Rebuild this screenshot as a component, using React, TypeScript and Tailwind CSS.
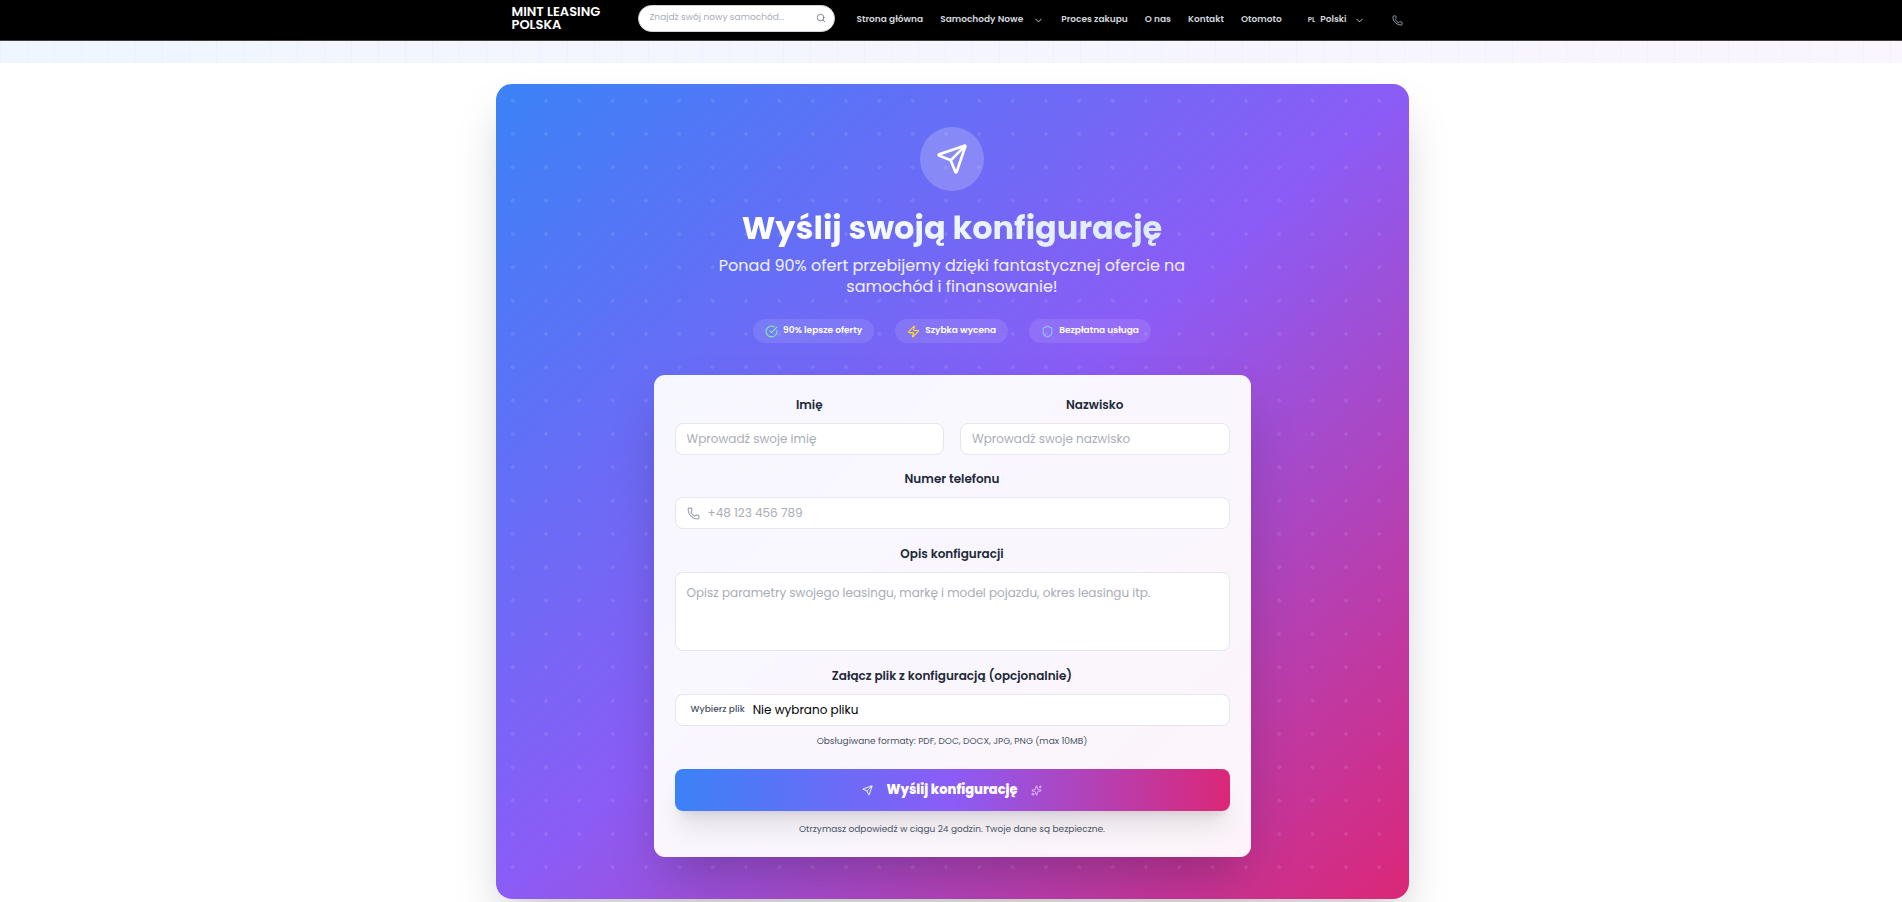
import React from "react";
import {
  ChevronDown,
  CircleCheckBig,
  Phone,
  Search,
  Send,
  Shield,
  Sparkles,
  Zap,
} from "lucide-react";

const navLinks = [
  { label: "Strona główna" },
  { label: "Samochody Nowe", dropdown: true },
  { label: "Proces zakupu" },
  { label: "O nas" },
  { label: "Kontakt" },
  { label: "Otomoto" },
];

const badges = [
  { label: "90% lepsze oferty", icon: CircleCheckBig, color: "text-green-300" },
  { label: "Szybka wycena", icon: Zap, color: "text-yellow-300" },
  { label: "Bezpłatna usługa", icon: Shield, color: "text-blue-300" },
];

const inputClass =
  "h-8 w-full rounded-lg border border-gray-200 bg-white px-[11px] text-[12px] text-gray-900 placeholder:text-[#a9adb6]";

export default function App() {
  return (
    <div className="min-h-screen overflow-hidden bg-white font-[Poppins,Inter,sans-serif] antialiased">
      <Header />
      <div className="h-[22px] bg-linear-to-r from-blue-50 to-purple-50">
        <div className="h-full bg-[linear-gradient(to_right,rgba(99,102,241,0.03)_1px,transparent_1px)] bg-size-[27px_27px]" />
      </div>
      <main className="mt-[21px] pl-0.5">
        <ConfigurationSection />
      </main>
    </div>
  );
}

const Header = () => {
  return (
    <header className="border-b border-neutral-700 bg-black pl-0.5 text-[9px] font-semibold text-gray-300">
      <div className="mx-auto flex h-10 max-w-[913px] items-center pr-1.5 pl-4">
        <a
          href="#"
          className="mb-1 w-[126px] shrink-0 text-[13px] leading-[13px] whitespace-nowrap text-white"
        >
          <span className="block">MINT LEASING</span>
          <span className="block">POLSKA</span>
        </a>
        <form className="mb-1 flex h-[27px] w-[197px] shrink-0 items-center rounded-full border border-gray-300 bg-white pr-2 pl-[11px]">
          <input
            type="search"
            aria-label="Szukaj samochodu"
            placeholder="Znajdź swój nowy samochód..."
            className="min-w-0 flex-1 text-[9px] font-normal text-gray-900 outline-none placeholder:text-[#a9adb6]"
          />
          <Search className="size-[10px] text-gray-500" />
        </form>
        <nav className="ml-[22px] flex items-center gap-[17px] whitespace-nowrap">
          {navLinks.map((link) => (
            <a key={link.label} href="#" className="flex items-center">
              {link.label}
              {link.dropdown && <ChevronDown className="ml-2.5 size-[11px]" />}
            </a>
          ))}
        </nav>
        <button className="ml-[26px] flex items-center gap-[5px]">
          <span className="text-[7px]">PL</span>
          Polski
          <ChevronDown className="ml-0.5 size-[11px]" />
        </button>
        <a href="#" aria-label="Zadzwoń" className="ml-auto text-gray-400">
          <Phone className="size-[11px]" />
        </a>
      </div>
    </header>
  );
};

const ConfigurationSection = () => {
  return (
    <section className="mx-auto max-w-[913px] rounded-2xl bg-[radial-gradient(circle_at_50%_50%,rgba(255,255,255,0.1)_2px,transparent_2px),linear-gradient(to_bottom_right,#3b82f6,#8b5cf6,#db2777)] bg-size-[33.33px_33.33px,100%_100%] px-4 pt-[43px] pb-[42px] text-center shadow-2xl">
      <div className="mx-auto flex size-16 items-center justify-center rounded-full bg-white/20">
        <Send className="size-8 text-white" />
      </div>
      <h1 className="mx-auto mt-4 w-fit bg-linear-to-r from-white to-blue-100 bg-clip-text text-[32px] leading-[42px] font-bold text-transparent">
        Wyślij swoją konfigurację
      </h1>
      <p className="mx-auto mt-1.5 max-w-[480px] text-[16px] leading-[21px] text-white/90">
        Ponad 90% ofert przebijemy dzięki fantastycznej ofercie na samochód i
        finansowanie!
      </p>
      <div className="mt-[22px] flex justify-center gap-[21px]">
        {badges.map(({ label, icon: Icon, color }) => (
          <div
            key={label}
            className="flex h-6 items-center gap-[5px] rounded-full bg-white/10 px-3 text-[9px] font-semibold text-white"
          >
            <Icon className={`size-[13px] ${color}`} />
            {label}
          </div>
        ))}
      </div>
      <ConfigurationForm />
    </section>
  );
};

const Field = ({
  id,
  label,
  children,
}: {
  id: string;
  label: string;
  children: React.ReactNode;
}) => {
  return (
    <div>
      <label
        htmlFor={id}
        className="mb-2 block text-[12px] leading-5 font-semibold text-gray-800"
      >
        {label}
      </label>
      {children}
    </div>
  );
};

const ConfigurationForm = () => {
  return (
    <form className="mx-auto mt-8 max-w-[597px] rounded-[11px] bg-white/95 px-[21px] pt-5 pb-[21px] shadow-2xl">
      <div className="grid grid-cols-2 gap-4">
        <Field id="firstName" label="Imię">
          <input
            id="firstName"
            type="text"
            placeholder="Wprowadź swoje imię"
            className={inputClass}
          />
        </Field>
        <Field id="lastName" label="Nazwisko">
          <input
            id="lastName"
            type="text"
            placeholder="Wprowadź swoje nazwisko"
            className={inputClass}
          />
        </Field>
      </div>
      <div className="mt-[14px] flex flex-col gap-[15px]">
        <Field id="phone" label="Numer telefonu">
          <div className="flex h-8 items-center gap-2 rounded-lg border border-gray-200 bg-white px-[11px]">
            <Phone className="size-[13px] text-gray-400" />
            <input
              id="phone"
              type="tel"
              placeholder="+48 123 456 789"
              className="flex-1 text-[12px] text-gray-900 outline-none placeholder:text-[#a9adb6]"
            />
          </div>
        </Field>
        <Field id="description" label="Opis konfiguracji">
          <textarea
            id="description"
            placeholder="Opisz parametry swojego leasingu, markę i model pojazdu, okres leasingu itp."
            className="block h-[79px] w-full resize-none rounded-lg border border-gray-200 bg-white px-[11px] py-[10px] text-[12px] leading-5 text-gray-900 placeholder:text-[#a9adb6]"
          />
        </Field>
        <Field id="file" label="Załącz plik z konfiguracją (opcjonalnie)">
          <label
            htmlFor="file"
            className="flex h-8 cursor-pointer items-center gap-2 rounded-lg border border-gray-200 bg-white px-[15px] text-[12px] text-black"
          >
            <span className="text-[9px] font-medium text-gray-600">
              Wybierz plik
            </span>
            Nie wybrano pliku
            <input id="file" type="file" className="sr-only" />
          </label>
          <p className="mt-2 text-[9px] leading-[14px] text-gray-600">
            Obsługiwane formaty: PDF, DOC, DOCX, JPG, PNG (max 10MB)
          </p>
        </Field>
      </div>
      <button
        type="submit"
        className="mt-[21px] flex h-[42px] w-full items-center justify-center gap-[13px] rounded-lg bg-[linear-gradient(to_right,#3b82f6,#8b5cf6,#db2777)] text-[13px] font-extrabold text-white shadow-xl"
      >
        <Send className="size-[11px]" />
        Wyślij konfigurację
        <Sparkles className="size-[11px] opacity-70" />
      </button>
      <p className="mt-[11px] text-[9px] leading-[14px] text-gray-600">
        Otrzymasz odpowiedź w ciągu 24 godzin. Twoje dane są bezpieczne.
      </p>
    </form>
  );
};
